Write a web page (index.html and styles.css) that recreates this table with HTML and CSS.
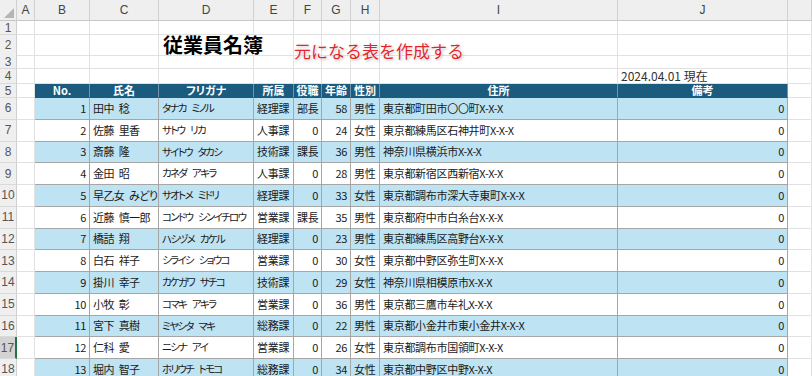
FILE: index.html
```html
<!DOCTYPE html>
<html lang="ja">
<head>
    <meta charset="UTF-8">
    <title>従業員名簿</title>
    <link rel="stylesheet" href="styles.css">
</head>
<body>
    <div class="sheet">
        <div class="row hdr">
            <div class="c corner"><span class="tri"></span></div>
            <div class="c ch">A</div>
            <div class="c ch">B</div>
            <div class="c ch">C</div>
            <div class="c ch">D</div>
            <div class="c ch">E</div>
            <div class="c ch">F</div>
            <div class="c ch">G</div>
            <div class="c ch">H</div>
            <div class="c ch">I</div>
            <div class="c ch">J</div>
            <div class="c ch"></div>
        </div>

        <div class="row r1">
            <div class="c rh">1</div>
            <div class="c"></div><div class="c"></div><div class="c"></div><div class="c"></div>
            <div class="c"></div><div class="c"></div><div class="c"></div><div class="c"></div>
            <div class="c"></div><div class="c"></div><div class="c"></div>
        </div>
        <div class="row r2">
            <div class="c rh">2</div>
            <div class="c"></div><div class="c"></div><div class="c"></div>
            <div class="c title">従業員名簿</div>
            <div class="c"></div><div class="c"></div><div class="c"></div><div class="c"></div>
            <div class="c"></div><div class="c"></div><div class="c"></div>
        </div>
        <div class="row r3">
            <div class="c rh">3</div>
            <div class="c"></div><div class="c"></div><div class="c"></div><div class="c"></div>
            <div class="c"></div><div class="c"></div><div class="c"></div><div class="c"></div>
            <div class="c"></div><div class="c"></div><div class="c"></div>
        </div>
        <div class="row r4">
            <div class="c rh">4</div>
            <div class="c"></div><div class="c"></div><div class="c"></div><div class="c"></div>
            <div class="c"></div><div class="c"></div><div class="c"></div><div class="c"></div>
            <div class="c"></div>
            <div class="c date">2024.04.01 現在</div>
            <div class="c"></div>
        </div>

        <div class="row r5">
            <div class="c rh">5</div>
            <div class="c"></div>
            <div class="c th">No.</div>
            <div class="c th">氏名</div>
            <div class="c th">フリガナ</div>
            <div class="c th">所属</div>
            <div class="c th">役職</div>
            <div class="c th">年齢</div>
            <div class="c th">性別</div>
            <div class="c th">住所</div>
            <div class="c th">備考</div>
            <div class="c"></div>
        </div>

        <div class="row d alt">
            <div class="c rh">6</div><div class="c"></div>
            <div class="c t n">1</div><div class="c t name">田中 稔</div><div class="c t kana">タナカ ミノル</div>
            <div class="c t">経理課</div><div class="c t">部長</div><div class="c t n">58</div><div class="c t">男性</div>
            <div class="c t">東京都町田市〇〇町X-X-X</div><div class="c t n">0</div><div class="c"></div>
        </div>
        <div class="row d">
            <div class="c rh">7</div><div class="c"></div>
            <div class="c t n">2</div><div class="c t name">佐藤 里香</div><div class="c t kana">サトウ リカ</div>
            <div class="c t">人事課</div><div class="c t n">0</div><div class="c t n">24</div><div class="c t">女性</div>
            <div class="c t">東京都練馬区石神井町X-X-X</div><div class="c t n">0</div><div class="c"></div>
        </div>
        <div class="row d alt">
            <div class="c rh">8</div><div class="c"></div>
            <div class="c t n">3</div><div class="c t name">斎藤 隆</div><div class="c t kana">サイトウ タカシ</div>
            <div class="c t">技術課</div><div class="c t">課長</div><div class="c t n">36</div><div class="c t">男性</div>
            <div class="c t">神奈川県横浜市X-X-X</div><div class="c t n">0</div><div class="c"></div>
        </div>
        <div class="row d">
            <div class="c rh">9</div><div class="c"></div>
            <div class="c t n">4</div><div class="c t name">金田 昭</div><div class="c t kana">カネダ アキラ</div>
            <div class="c t">人事課</div><div class="c t n">0</div><div class="c t n">28</div><div class="c t">男性</div>
            <div class="c t">東京都新宿区西新宿X-X-X</div><div class="c t n">0</div><div class="c"></div>
        </div>
        <div class="row d alt">
            <div class="c rh">10</div><div class="c"></div>
            <div class="c t n">5</div><div class="c t name">早乙女 みどり</div><div class="c t kana">サオトメ ミドリ</div>
            <div class="c t">経理課</div><div class="c t n">0</div><div class="c t n">33</div><div class="c t">女性</div>
            <div class="c t">東京都調布市深大寺東町X-X-X</div><div class="c t n">0</div><div class="c"></div>
        </div>
        <div class="row d">
            <div class="c rh">11</div><div class="c"></div>
            <div class="c t n">6</div><div class="c t name">近藤 慎一郎</div><div class="c t kana">コンドウ シンイチロウ</div>
            <div class="c t">営業課</div><div class="c t">課長</div><div class="c t n">35</div><div class="c t">男性</div>
            <div class="c t">東京都府中市白糸台X-X-X</div><div class="c t n">0</div><div class="c"></div>
        </div>
        <div class="row d alt">
            <div class="c rh">12</div><div class="c"></div>
            <div class="c t n">7</div><div class="c t name">橋詰 翔</div><div class="c t kana">ハシヅメ カケル</div>
            <div class="c t">経理課</div><div class="c t n">0</div><div class="c t n">23</div><div class="c t">男性</div>
            <div class="c t">東京都練馬区高野台X-X-X</div><div class="c t n">0</div><div class="c"></div>
        </div>
        <div class="row d">
            <div class="c rh">13</div><div class="c"></div>
            <div class="c t n">8</div><div class="c t name">白石 祥子</div><div class="c t kana">シライシ ショウコ</div>
            <div class="c t">営業課</div><div class="c t n">0</div><div class="c t n">30</div><div class="c t">女性</div>
            <div class="c t">東京都中野区弥生町X-X-X</div><div class="c t n">0</div><div class="c"></div>
        </div>
        <div class="row d alt">
            <div class="c rh">14</div><div class="c"></div>
            <div class="c t n">9</div><div class="c t name">掛川 幸子</div><div class="c t kana">カケガワ サチコ</div>
            <div class="c t">技術課</div><div class="c t n">0</div><div class="c t n">29</div><div class="c t">女性</div>
            <div class="c t">神奈川県相模原市X-X-X</div><div class="c t n">0</div><div class="c"></div>
        </div>
        <div class="row d">
            <div class="c rh">15</div><div class="c"></div>
            <div class="c t n">10</div><div class="c t name">小牧 彰</div><div class="c t kana">コマキ アキラ</div>
            <div class="c t">営業課</div><div class="c t n">0</div><div class="c t n">36</div><div class="c t">男性</div>
            <div class="c t">東京都三鷹市牟礼X-X-X</div><div class="c t n">0</div><div class="c"></div>
        </div>
        <div class="row d alt">
            <div class="c rh">16</div><div class="c"></div>
            <div class="c t n">11</div><div class="c t name">宮下 真樹</div><div class="c t kana">ミヤシタ マキ</div>
            <div class="c t">総務課</div><div class="c t n">0</div><div class="c t n">22</div><div class="c t">男性</div>
            <div class="c t">東京都小金井市東小金井X-X-X</div><div class="c t n">0</div><div class="c"></div>
        </div>
        <div class="row d">
            <div class="c rh sel">17</div><div class="c"></div>
            <div class="c t n">12</div><div class="c t name">仁科 愛</div><div class="c t kana">ニシナ アイ</div>
            <div class="c t">営業課</div><div class="c t n">0</div><div class="c t n">26</div><div class="c t">女性</div>
            <div class="c t">東京都調布市国領町X-X-X</div><div class="c t n">0</div><div class="c"></div>
        </div>
        <div class="row d alt">
            <div class="c rh">18</div><div class="c"></div>
            <div class="c t n">13</div><div class="c t name">堀内 智子</div><div class="c t kana">ホリウチ トモコ</div>
            <div class="c t">総務課</div><div class="c t n">0</div><div class="c t n">34</div><div class="c t">女性</div>
            <div class="c t">東京都中野区中野X-X-X</div><div class="c t n">0</div><div class="c"></div>
        </div>

        <div class="note">元になる表を作成する</div>
    </div>
</body>
</html>
```

FILE: styles.css
```css
body {
    margin: 0;
    background-color: #fff;
    font-family: "Noto Sans CJK JP", "Noto Sans", sans-serif;
    font-size: 11px;
    color: #1a1a1a;
}

.sheet {
    position: relative;
    width: 812px;
    height: 376px;
    overflow: hidden;
}

.row {
    display: grid;
    grid-template-columns: 17px 18px 55px 69px 95px 40px 28px 29px 29px 238px 170px 1fr;
}

.hdr { height: 21px; }
.r1 { height: 14px; }
.r2 { height: 20px; }
.r3 { height: 14px; }
.r4 { height: 15px; }
.r5 { height: 14px; }
.d { height: 21.75px; }

.c {
    box-sizing: border-box;
    min-width: 0;
    display: flex;
    align-items: center;
    padding: 0 3px;
    border-right: 1px solid #e1e1e1;
    border-bottom: 1px solid #e1e1e1;
    white-space: nowrap;
    line-height: 1;
    font-feature-settings: "palt";
}

/* sheet headers */
.corner {
    background-color: #efefef;
    border-right-color: #d0d0d0;
    border-bottom-color: #c6c6c6;
    align-items: flex-end;
    justify-content: flex-end;
    padding: 0 2px 2px 0;
}

.tri {
    width: 10px;
    height: 10px;
    background-color: #b5b5b5;
    clip-path: polygon(100% 0, 100% 100%, 0 100%);
}

.ch, .rh {
    justify-content: center;
    background-color: #efefef;
    font-family: "Liberation Sans", Arial, sans-serif;
    font-size: 12px;
    font-feature-settings: normal;
}

.ch {
    color: #444;
    border-right-color: #d0d0d0;
    border-bottom-color: #c6c6c6;
}

.rh {
    padding: 0;
    color: #555;
    border-right-color: #cfcfcf;
    border-bottom-color: #dadada;
}

.rh.sel {
    background-color: #d3d3d3;
    border-right: 2px solid #217346;
}

/* titles */
.title {
    padding-left: 4px;
    font-size: 20px;
    font-weight: 700;
    color: #000;
    border-right-color: transparent;
}

.date {
    font-size: 12px;
    color: #333;
}

.note {
    position: absolute;
    left: 294px;
    top: 42px;
    font-size: 17px;
    line-height: 1;
    color: #e3262b;
    text-shadow: 0 0 2px #fff, 0 0 3px #fff, 1px 1px 3px rgba(0, 0, 0, 0.35);
}

/* table */
.th {
    justify-content: center;
    background-color: #1b5c7e;
    color: #fff;
    font-weight: 700;
    border-right-color: #6f93a8;
    border-bottom-color: #1b5c7e;
}

.t {
    letter-spacing: -0.3px;
    border-right-color: #a6a6a6;
    border-bottom-color: #a6a6a6;
}

.alt .t {
    background-color: #bee3f3;
}

.name {
    letter-spacing: -0.6px;
    word-spacing: 3px;
}

.kana {
    font-size: 10.5px;
    letter-spacing: -1.7px;
    word-spacing: 5px;
}

.n {
    justify-content: flex-end;
}
```
